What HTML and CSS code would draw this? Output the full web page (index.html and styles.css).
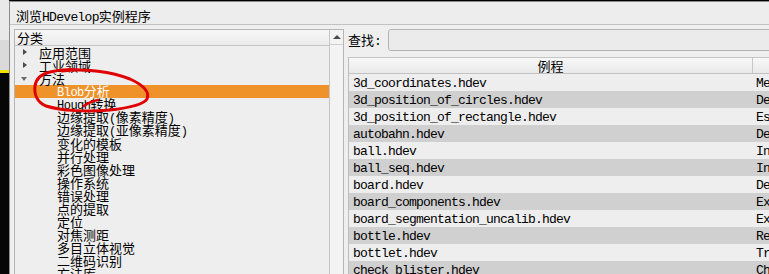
FILE: index.html
```html
<!DOCTYPE html>
<html>
<head>
<meta charset="utf-8">
<title>浏览HDevelop实例程序</title>
<link rel="stylesheet" href="styles.css">
</head>
<body>
<div class="screen">

<div class="behind">
  <div class="behind-top"></div>
  <div class="behind-mid"></div>
  <div class="behind-yellow"></div>
  <div class="behind-dark"></div>
</div>

<div class="dialog">
  <div class="titlebar">浏览<span class="lat title-lat">HDevelop</span>实例程序</div>

  <div class="content">
    <div class="treebox">
      <div class="tree">
        <div class="tree-head">分类</div>
        <div class="node"><span class="arrow closed"></span><span class="label">应用范围</span></div>
        <div class="node"><span class="arrow closed"></span><span class="label">工业领域</span></div>
        <div class="node"><span class="arrow open"></span><span class="label">方法</span></div>
        <div class="node sub selected"><span class="label"><span class="lat">Blob</span>分析</span></div>
        <div class="node sub"><span class="label"><span class="lat">Hough</span>转换</span></div>
        <div class="node sub"><span class="label">边缘提取<span class="lat">(</span>像素精度<span class="lat">)</span></span></div>
        <div class="node sub"><span class="label">边缘提取<span class="lat">(</span>亚像素精度<span class="lat">)</span></span></div>
        <div class="node sub"><span class="label">变化的模板</span></div>
        <div class="node sub"><span class="label">并行处理</span></div>
        <div class="node sub"><span class="label">彩色图像处理</span></div>
        <div class="node sub"><span class="label">操作系统</span></div>
        <div class="node sub"><span class="label">错误处理</span></div>
        <div class="node sub"><span class="label">点的提取</span></div>
        <div class="node sub"><span class="label">定位</span></div>
        <div class="node sub"><span class="label">对焦测距</span></div>
        <div class="node sub"><span class="label">多目立体视觉</span></div>
        <div class="node sub"><span class="label">二维码识别</span></div>
        <div class="node sub"><span class="label">方法库</span></div>
      </div>
      <div class="vscroll">
        <div class="vscroll-up"></div>
      </div>
    </div>

    <div class="examples">
      <div class="search">
        <span class="search-label">查找<span class="lat">:</span></span>
        <div class="search-input"></div>
      </div>

      <div class="table">
        <div class="row head"><div class="c1">例程</div><div class="c2"></div></div>
        <div class="row"><div class="c1">3d_coordinates.hdev</div><div class="c2">Measure</div></div>
        <div class="row alt"><div class="c1">3d_position_of_circles.hdev</div><div class="c2">Determine</div></div>
        <div class="row"><div class="c1">3d_position_of_rectangle.hdev</div><div class="c2">Estimate</div></div>
        <div class="row alt"><div class="c1">autobahn.hdev</div><div class="c2">Detect</div></div>
        <div class="row"><div class="c1">ball.hdev</div><div class="c2">Inspect</div></div>
        <div class="row alt"><div class="c1">ball_seq.hdev</div><div class="c2">Inspect</div></div>
        <div class="row"><div class="c1">board.hdev</div><div class="c2">Detect</div></div>
        <div class="row alt"><div class="c1">board_components.hdev</div><div class="c2">Extract</div></div>
        <div class="row"><div class="c1">board_segmentation_uncalib.hdev</div><div class="c2">Extract</div></div>
        <div class="row alt"><div class="c1">bottle.hdev</div><div class="c2">Read</div></div>
        <div class="row"><div class="c1">bottlet.hdev</div><div class="c2">Train</div></div>
        <div class="row alt"><div class="c1">check_blister.hdev</div><div class="c2">Check</div></div>
      </div>
    </div>
  </div>
</div>

<!-- hand drawn red mark over the tree -->
<svg class="mark" width="769" height="274" viewBox="0 0 769 274">
  <path d="M62 71 C85 68 112 72 130 79 C143 85 150 92 147 99 C143 105 128 108 110 110 C88 112 62 111 46 106 C37 102 34 94 35 86 C36 79 41 74 50 72 C58 70 70 69 80 70"
        fill="none" stroke="#e00000" stroke-width="3" stroke-linecap="round"/>
  <path d="M84 106 C88 103 92 101 98 100" fill="none" stroke="#e00000" stroke-width="2.5" stroke-linecap="round"/>
</svg>

</div>
</body>
</html>
```

FILE: styles.css
```css
body {
  margin: 0;
  background: #000;
  font-family: "Noto Sans CJK SC", sans-serif;
  font-size: 13px;
  color: #000;
}

.screen {
  position: relative;
  display: flex;
  width: 769px;
  height: 274px;
  overflow: hidden;
}

.lat {
  font-family: "Liberation Mono", monospace;
  font-size: 12px;
  letter-spacing: -0.5px;
}

/* window behind the dialog */
.behind {
  flex: none;
  width: 9px;
  display: flex;
  flex-direction: column;
}

.behind-top {
  height: 40px;
  background: #e9e9e9;
}

.behind-mid {
  height: 30px;
  background: #dadada;
}

.behind-yellow {
  height: 3px;
  background: #f2e200;
}

.behind-dark {
  flex: 1;
  background: #060606;
}

/* dialog */
.dialog {
  flex: 1;
  min-width: 0;
  margin-top: 1px;
  background: #efefef;
  border-left: 1px solid #8c8c8c;
  border-top: 1px solid #8c8c8c;
  display: flex;
  flex-direction: column;
  overflow: hidden;
}

.titlebar {
  height: 15px;
  padding: 7px 0 0 6px;
  line-height: 13px;
  background: #ededed;
  border-bottom: 1px solid #c2c2c2;
  white-space: nowrap;
}

.title-lat {
  font-size: 13px;
  letter-spacing: -0.7px;
}

.content {
  display: flex;
  gap: 4px;
  padding: 4px 0 0 4px;
}

/* category tree */
.treebox {
  flex: none;
  width: 328px;
  height: 260px;
  display: flex;
  border: 1px solid #b6b6b6;
  border-bottom: none;
  background: #eeeeee;
}

.tree {
  flex: 1;
  min-width: 0;
}

.tree-head {
  height: 15px;
  line-height: 15px;
  padding-left: 2px;
  background: linear-gradient(#f7f7f7, #ebebeb);
  border-bottom: 1px solid #c4c4c4;
}

.node {
  display: flex;
  align-items: center;
  height: 13px;
  line-height: 13px;
  white-space: nowrap;
}

.node.sub {
  padding-left: 42px;
}

.node.selected {
  background: #f0922a;
  color: #fff;
}

.label {
  line-height: 13px;
}

.arrow {
  flex: none;
  width: 17px;
  height: 13px;
  margin-left: 7px;
  position: relative;
}

.arrow::before {
  content: "";
  position: absolute;
  width: 0;
  height: 0;
}

.arrow.closed::before {
  left: 1px;
  top: 3px;
  border-left: 4px solid #4a4a4a;
  border-top: 3px solid transparent;
  border-bottom: 3px solid transparent;
}

.arrow.open::before {
  left: -1px;
  top: 5px;
  border-top: 4px solid #6a6a6a;
  border-left: 3px solid transparent;
  border-right: 3px solid transparent;
}

.vscroll {
  flex: none;
  width: 13px;
  border-left: 1px solid #c6c6c6;
  background: #f3f3f3;
}

.vscroll-up {
  height: 14px;
  border-bottom: 1px solid #d0d0d0;
  position: relative;
}

.vscroll-up::before {
  content: "";
  position: absolute;
  left: 3px;
  top: 5px;
  border-bottom: 4px solid #4a4a4a;
  border-left: 4px solid transparent;
  border-right: 4px solid transparent;
}

/* example list */
.examples {
  flex: none;
  width: 460px;
}

.search {
  display: flex;
  align-items: center;
  height: 22px;
}

.search-label {
  width: 40px;
  flex: none;
  line-height: 13px;
}

.search-label .lat {
  font-size: 13px;
}

.search-input {
  flex: 1;
  height: 20px;
  border: 1px solid #b4b4b4;
  border-radius: 3px;
  background: #ebebeb;
}

.table {
  margin-top: 6px;
  border-left: 1px solid #bdbdbd;
  border-top: 1px solid #c4c4c4;
}

.row {
  display: flex;
  height: 17px;
  line-height: 17px;
  background: #eeeeee;
  font-family: "Liberation Mono", monospace;
  font-size: 13px;
  letter-spacing: -0.8px;
  white-space: nowrap;
}

.row.alt {
  background: #d0d0d0;
}

.row .c1 {
  flex: none;
  width: 400px;
  padding-left: 4px;
  padding-top: 1px;
  height: 16px;
}

.row .c2 {
  padding-left: 3px;
  padding-top: 1px;
}

.row.head {
  height: 15px;
  line-height: 15px;
  background: linear-gradient(#f8f8f8, #e9e9e9);
  border-bottom: 1px solid #c2c2c2;
  font-family: "Noto Sans CJK SC", sans-serif;
  letter-spacing: 0;
}

.row.head .c1 {
  width: 403px;
  padding: 0;
  height: 15px;
  text-align: center;
  border-right: 1px solid #c8c8c8;
}

.row.head .c2 {
  padding: 0;
}

/* annotation */
.mark {
  position: absolute;
  left: 0;
  top: 0;
  pointer-events: none;
}
```
